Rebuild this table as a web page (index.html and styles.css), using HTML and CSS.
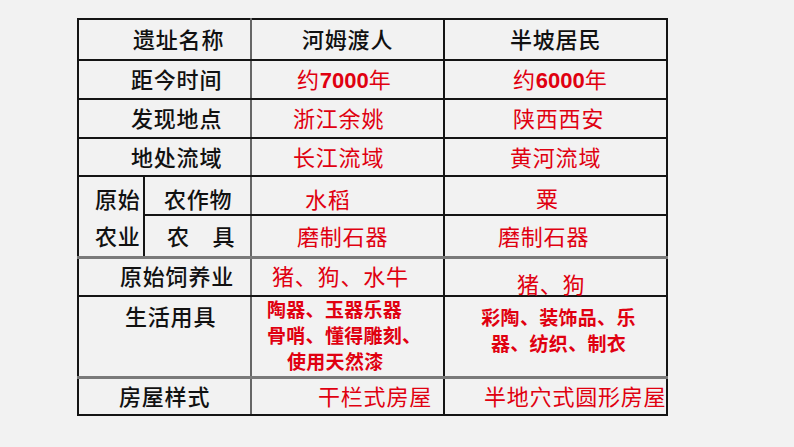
FILE: index.html
```html
<!DOCTYPE html>
<html lang="zh">
<head>
<meta charset="utf-8">
<title>河姆渡人与半坡居民</title>
<link rel="stylesheet" href="styles.css">
</head>
<body>
<div class="page">
<table class="sheet">
  <colgroup>
    <col class="ca"><col class="cb"><col class="cc"><col class="cd">
  </colgroup>
  <tr class="r1">
    <td colspan="2" class="lab l-a">遗址名称</td>
    <td class="head h2">河姆渡人</td>
    <td class="head h3">半坡居民</td>
  </tr>
  <tr class="r2">
    <td colspan="2" class="lab l-b">距今时间</td>
    <td class="red x46">约<b>7000</b>年</td>
    <td class="red x69">约<b>6000</b>年</td>
  </tr>
  <tr class="r3">
    <td colspan="2" class="lab l-b">发现地点</td>
    <td class="red x42">浙江余姚</td>
    <td class="red x69">陕西西安</td>
  </tr>
  <tr class="r4">
    <td colspan="2" class="lab l-b">地处流域</td>
    <td class="red x42">长江流域</td>
    <td class="red x66">黄河流域</td>
  </tr>
  <tr class="r5">
    <td rowspan="2" class="lab agri">原始<br>农业</td>
    <td class="lab sub1 down">农作物</td>
    <td class="red x54 down">水稻</td>
    <td class="red x92 down2">粟</td>
  </tr>
  <tr class="r6">
    <td class="lab sub2">农　具</td>
    <td class="red x46">磨制石器</td>
    <td class="red x54">磨制石器</td>
  </tr>
  <tr class="r7 gray-top">
    <td colspan="2" class="lab l-c">原始饲养业</td>
    <td class="red x21">猪、狗、水牛</td>
    <td class="red x73 low">猪、狗</td>
  </tr>
  <tr class="r8">
    <td colspan="2" class="lab l-d top">生活用具</td>
    <td class="redb tools2">陶器、玉器乐器<br>骨哨、懂得雕刻、<br><span class="ind">使用天然漆</span></td>
    <td class="redb tools3">彩陶、装饰品、乐<br>器、纺织、制衣</td>
  </tr>
  <tr class="r9 gray-top">
    <td colspan="2" class="lab l-e">房屋样式</td>
    <td class="red x67">干栏式房屋</td>
    <td class="red x40">半地穴式圆形房屋</td>
  </tr>
</table>
</div>
</body>
</html>
```

FILE: styles.css
```css
html, body {
  margin: 0;
  padding: 0;
  background: #f2f2f2;
}
.page {
  width: 794px;
  height: 447px;
  padding: 18px 0 0 77px;
  box-sizing: border-box;
  font-family: "Liberation Sans", "Noto Sans CJK SC", sans-serif;
}
.sheet {
  border-collapse: collapse;
  table-layout: fixed;
  width: 591px;
  border: 2px solid #111;
}
.ca { width: 66px; }
.cb { width: 107px; }
.cc { width: 193px; }
.cd { width: 223px; }

.sheet td {
  border: 2px solid #141414;
  padding: 3px 0 0 0;
  vertical-align: middle;
  white-space: nowrap;
  font-size: 22px;
  line-height: 24px;
  letter-spacing: 0.8px;
  text-align: left;
  overflow: visible;
}
.sheet td.lab:not(.agri) {
  border-right: 2px solid #666;
}
.gray-top td { border-top: 3px solid #7a7a7a; }

.r1 { height: 41px; }
.r2 { height: 39px; }
.r3 { height: 39px; }
.r4 { height: 38px; }
.r5 { height: 39px; }
.r6 { height: 42px; }
.r7 { height: 38px; }
.r8 { height: 81px; }
.r9 { height: 38px; }

.lab, .head { color: #111; font-weight: 500; }
.h2 { padding-left: 50px !important; }
.h3 { padding-left: 65px !important; }
.l-a { padding-left: 54px !important; }
.l-b { padding-left: 52px !important; }
.l-c { padding-left: 41px !important; }
.l-d { padding-left: 46px !important; }
.l-e { padding-left: 40px !important; }
.agri {
  padding: 5px 0 0 16px !important;
  line-height: 37px !important;
}
.sub1 { padding-left: 19px !important; }
.sub2 { padding-left: 22px !important; }
.down { padding-top: 11px !important; }
.down2 { padding-top: 9px !important; }

.red { color: #e00010; }
.red b { font-weight: 700; letter-spacing: 0; }
.redb {
  color: #e00010;
  font-weight: 700;
  font-size: 19px !important;
  line-height: 26px !important;
  letter-spacing: 0.3px !important;
  vertical-align: top !important;
}
.tools2 { padding: 1px 0 0 15px !important; }
.tools2 .ind { padding-left: 20px; }
.tools3 { padding: 9px 0 0 6px !important; text-align: center !important; }
.top { vertical-align: top !important; padding-top: 9px !important; }
.low {
  vertical-align: bottom !important;
  padding-top: 0 !important;
  line-height: 18px !important;
}

.x21 { padding-left: 20px !important; }
.x40 { padding-left: 39px !important; }
.x42 { padding-left: 41px !important; }
.x46 { padding-left: 45px !important; }
.x54 { padding-left: 53px !important; }
.x66 { padding-left: 65px !important; }
.x67 { padding-left: 66px !important; }
.x69 { padding-left: 68px !important; }
.x73 { padding-left: 72px !important; }
.x92 { padding-left: 91px !important; }
```
